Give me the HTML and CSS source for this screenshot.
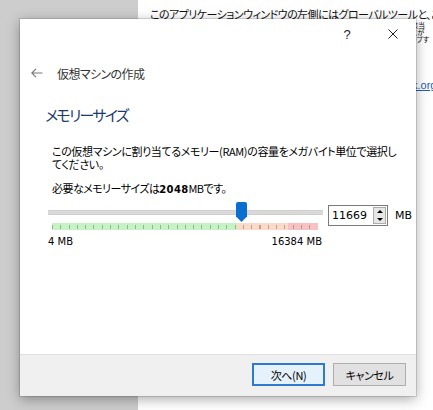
FILE: index.html
```html
<!DOCTYPE html>
<html lang="ja">
<head>
<meta charset="utf-8">
<link rel="stylesheet" href="styles.css">
</head>
<body>
<div class="desk">
  <div class="desk-text">
    <div class="desk-line">このアプリケーションウィンドウの左側にはグローバルツールと、ご</div>
    <div class="desk-side">
      <div>該当</div>
      <div>とが</div>
      <div>ップす</div>
    </div>
    <a class="desk-link">k.org</a>
  </div>
</div>

<div class="dialog">
  <div class="titlebar">
    <div class="cap">?</div>
    <div class="cap">
      <svg width="10" height="10" viewBox="0 0 10 10"><path d="M0.5 0.5 L9.5 9.5 M9.5 0.5 L0.5 9.5" stroke="#222" stroke-width="1" fill="none"/></svg>
    </div>
  </div>

  <div class="header">
    <svg class="back" width="12" height="10" viewBox="0 0 12 10"><path d="M0.5 5 H11.5 M5 0.8 L0.8 5 L5 9.2" stroke="#7a7a7a" stroke-width="1.2" fill="none"/></svg>
    <span class="header-title">仮想マシンの作成</span>
  </div>

  <div class="page-title">メモリーサイズ</div>

  <p class="desc">この仮想マシンに割り当てるメモリー(RAM)の容量をメガバイト単位で選択し<br>てください。</p>

  <p class="req">必要なメモリーサイズは<b>2048</b>MBです。</p>

  <div class="mem-row">
    <div class="slider">
      <div class="groove"></div>
      <div class="handle"></div>
      <div class="ticks"></div>
      <div class="scale">
        <span>4 MB</span>
        <span>16384 MB</span>
      </div>
    </div>
    <div class="spin">
      <span class="spin-val">11669</span>
      <span class="spin-btns">
        <span class="spin-up"></span>
        <span class="spin-down"></span>
      </span>
    </div>
    <span class="unit">MB</span>
  </div>

  <div class="footer">
    <button class="btn btn-default">次へ(N)</button>
    <button class="btn">キャンセル</button>
  </div>
</div>
</body>
</html>
```

FILE: styles.css
```css
html, body {
  margin: 0;
  padding: 0;
}
body {
  width: 433px;
  height: 410px;
  overflow: hidden;
  position: relative;
  background: linear-gradient(to right, #cdcdcd 0, #cdcdcd 138px, #ffffff 138px);
  font-family: "Noto Sans CJK JP", "Noto Sans", sans-serif;
  font-feature-settings: "palt";
  font-size: 11px;
  letter-spacing: -0.55px;
  color: #000;
}

.desk-text {
  padding-left: 150px;
  padding-top: 8px;
}
.desk-line {
  white-space: nowrap;
  line-height: 12px;
  color: #111;
}
.desk-side {
  margin-left: 261px;
  margin-top: 2px;
  font-size: 7px;
  line-height: 7px;
  letter-spacing: 0;
  white-space: nowrap;
  color: #111;
}
.desk-link {
  display: block;
  margin-left: 262px;
  margin-top: 36px;
  font-family: "Liberation Sans", sans-serif;
  font-size: 11px;
  line-height: 12px;
  letter-spacing: 0;
  color: #1a5fb4;
  text-decoration: underline;
  white-space: nowrap;
}

.dialog {
  position: absolute;
  left: 20px;
  top: 19px;
  width: 396px;
  height: 377px;
  background: #fff;
  display: flex;
  flex-direction: column;
  box-shadow: 0 0 0 1px rgba(0, 0, 0, 0.12), 0 3px 12px rgba(0, 0, 0, 0.35);
}

.titlebar {
  height: 30px;
  display: flex;
  justify-content: flex-end;
}
.cap {
  width: 46px;
  height: 30px;
  display: flex;
  align-items: center;
  justify-content: center;
  font-family: "Liberation Sans", sans-serif;
  font-size: 13px;
  letter-spacing: 0;
  color: #222;
}

.header {
  margin-top: 14px;
  height: 20px;
  display: flex;
  align-items: center;
  padding-left: 11px;
  gap: 14px;
}
.header-title {
  font-size: 12px;
  letter-spacing: -0.6px;
  color: #333;
}

.page-title {
  margin: 22px 0 0 25px;
  font-size: 15px;
  font-weight: 400;
  letter-spacing: -1.7px;
  line-height: 20px;
  color: #1d3a68;
}

.desc {
  margin: 20px 0 0 32px;
  line-height: 13px;
  letter-spacing: -0.38px;
  white-space: nowrap;
}
.req {
  margin: 11px 0 0 32px;
  line-height: 13px;
}
.req b {
  font-family: "DejaVu Sans", sans-serif;
  font-size: 10px;
  letter-spacing: 0.3px;
}

.mem-row {
  margin-top: 5px;
  display: flex;
  align-items: flex-start;
}
.slider {
  position: relative;
  width: 275px;
  margin-left: 28px;
  padding-top: 9px;
}
.groove {
  height: 3px;
  background: #d9d9d9;
  border: 1px solid #cfcfcf;
  border-left: 0;
  border-right: 0;
}
.handle {
  position: absolute;
  left: 188px;
  top: 1px;
  width: 11px;
  height: 20px;
  background: #0b6fd1;
  border-radius: 2px 2px 0 0;
  clip-path: polygon(0 0, 100% 0, 100% 72%, 50% 100%, 0 72%);
}
.ticks {
  margin: 8px 5px 0 4px;
  height: 7px;
  background:
    repeating-linear-gradient(to right, rgba(60, 60, 60, 0.35) 0, rgba(60, 60, 60, 0.35) 1px, transparent 1px, transparent 8.3px) 0 2px / 100% 4px no-repeat,
    linear-gradient(to right, #c6f2c6 0, #c6f2c6 185px, #fcd9c8 185px, #fcd9c8 236px, #f8c2c2 236px);
}
.scale {
  display: flex;
  justify-content: space-between;
  margin-top: 6px;
  padding-right: 1px;
  font-family: "DejaVu Sans", sans-serif;
  font-size: 10px;
  letter-spacing: 0;
  line-height: 12px;
}

.spin {
  margin: 4px 0 0 5px;
  width: 54px;
  height: 19px;
  border: 1px solid #7a7a7a;
  background: #fff;
  display: flex;
  align-items: center;
  justify-content: space-between;
  padding: 0 1px 0 3px;
  box-sizing: content-box;
  font-family: "DejaVu Sans", sans-serif;
  font-size: 11px;
  letter-spacing: 0;
}
.spin-btns {
  width: 13px;
  height: 17px;
  border: 1px solid #adadad;
  background: #e6e6e6;
  display: flex;
  flex-direction: column;
  align-items: center;
  justify-content: space-around;
  box-sizing: border-box;
}
.spin-up, .spin-down {
  width: 0;
  height: 0;
  border-left: 3px solid transparent;
  border-right: 3px solid transparent;
}
.spin-up { border-bottom: 3px solid #000; }
.spin-down { border-top: 3px solid #000; }
.unit {
  margin: 8px 0 0 7px;
  font-family: "DejaVu Sans", sans-serif;
  font-size: 11px;
  letter-spacing: 0;
  line-height: 13px;
}

.footer {
  margin-top: auto;
  height: 42px;
  border-top: 1px solid #dfdfdf;
  background: #f0f0f0;
  display: flex;
  justify-content: flex-end;
  align-items: flex-start;
  gap: 8px;
  padding: 8px 10px 0 0;
  box-sizing: border-box;
}
.btn {
  width: 73px;
  height: 23px;
  padding: 0;
  margin: 0;
  font-family: "Noto Sans CJK JP", sans-serif;
  font-feature-settings: "palt";
  font-size: 11px;
  letter-spacing: -0.4px;
  color: #000;
  background: #e1e1e1;
  border: 1px solid #adadad;
}
.btn-default {
  background: #e5f1fb;
  border: 2px solid #2c7bd0;
}
```
